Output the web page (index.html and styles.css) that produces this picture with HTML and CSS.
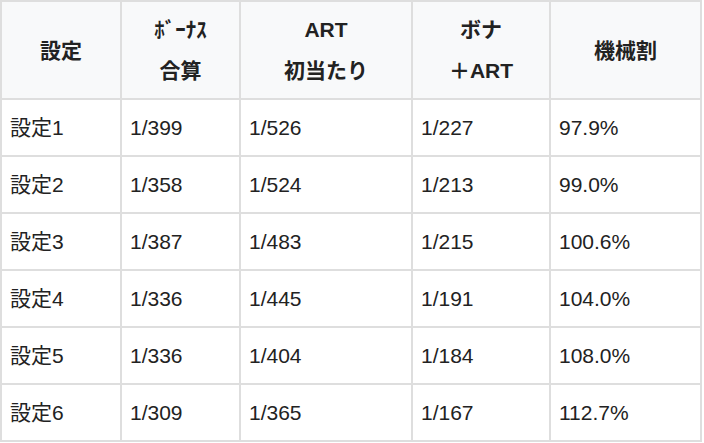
FILE: index.html
```html
<!DOCTYPE html>
<html lang="ja">
<head>
<meta charset="utf-8">
<link rel="stylesheet" href="styles.css">
</head>
<body>
<table class="spec">
  <colgroup>
    <col class="c1"><col class="c2"><col class="c3"><col class="c4"><col class="c5">
  </colgroup>
  <thead>
    <tr class="head">
      <th>設定</th>
      <th><span class="hw">ﾎﾞｰﾅｽ</span><br>合算</th>
      <th>ART<br>初当たり</th>
      <th>ボナ<br>＋ART</th>
      <th>機械割</th>
    </tr>
  </thead>
  <tbody>
    <tr><td>設定1</td><td>1/399</td><td>1/526</td><td>1/227</td><td>97.9%</td></tr>
    <tr><td>設定2</td><td>1/358</td><td>1/524</td><td>1/213</td><td>99.0%</td></tr>
    <tr><td>設定3</td><td>1/387</td><td>1/483</td><td>1/215</td><td>100.6%</td></tr>
    <tr><td>設定4</td><td>1/336</td><td>1/445</td><td>1/191</td><td>104.0%</td></tr>
    <tr><td>設定5</td><td>1/336</td><td>1/404</td><td>1/184</td><td>108.0%</td></tr>
    <tr><td>設定6</td><td>1/309</td><td>1/365</td><td>1/167</td><td>112.7%</td></tr>
  </tbody>
</table>
</body>
</html>
```
FILE: styles.css
```css
html, body {
  margin: 0;
  padding: 0;
  background: #ffffff;
}
body {
  font-family: "Liberation Sans", Arial, "Noto Sans CJK JP", sans-serif;
  font-size: 21px;
  color: #222222;
}
.spec {
  border-collapse: collapse;
  table-layout: fixed;
  width: 702px;
}
.c1 { width: 120px; }
.c2 { width: 119px; }
.c3 { width: 172px; }
.c4 { width: 138px; }
.c5 { width: 151px; }
.spec th,
.spec td {
  border: 2px solid #dedede;
  padding: 0 8px;
  vertical-align: middle;
}
.spec th {
  background: #f8f9fa;
  font-weight: bold;
  text-align: center;
  line-height: 41px;
}
.spec td {
  text-align: left;
  line-height: 24px;
}
.head { height: 98px; }
.spec tbody tr { height: 57px; }
.hw { font-weight: bold; }
```
